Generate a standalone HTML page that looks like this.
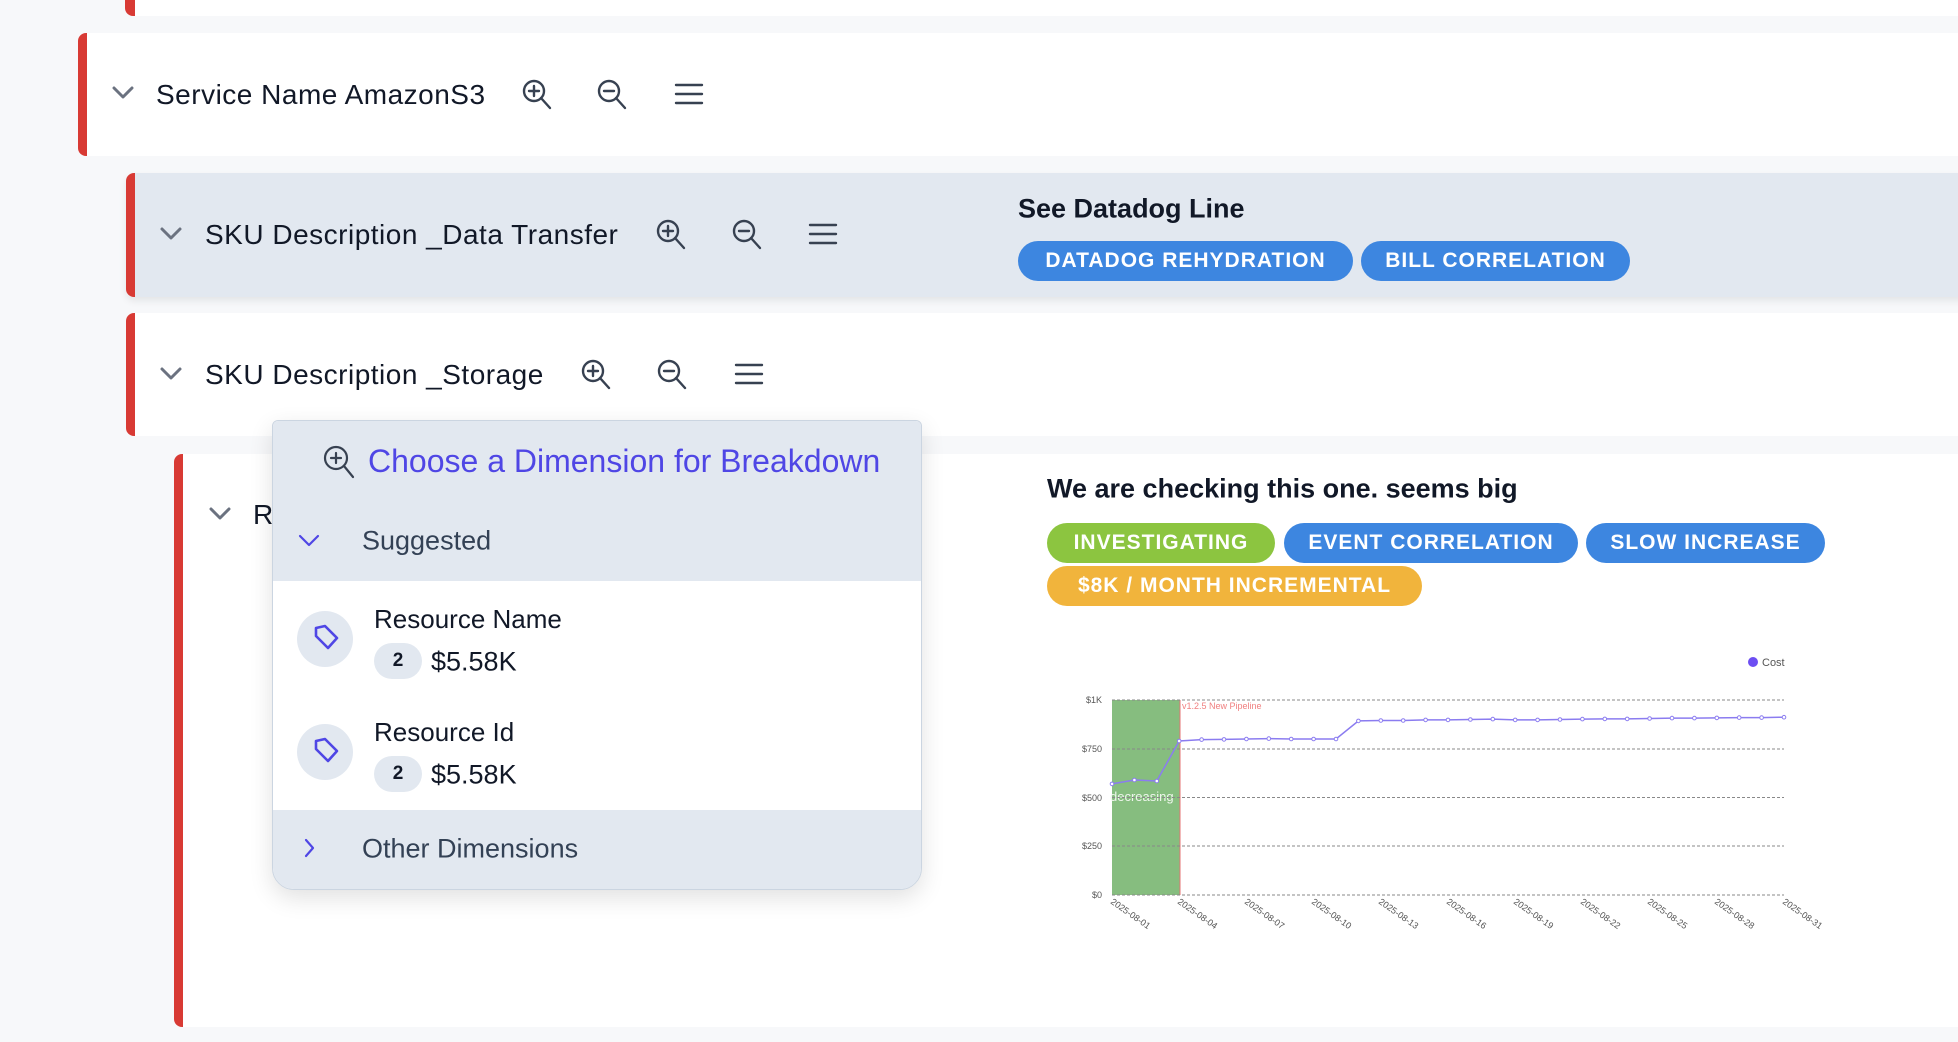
<!DOCTYPE html>
<html><head><meta charset="utf-8"><style>
*{margin:0;padding:0;box-sizing:border-box}
body{width:1958px;height:1042px;background:#f7f8fa;position:relative;overflow:hidden;font-family:"Liberation Sans",sans-serif;color:#111827}
.a{position:absolute}
.card{position:absolute;background:#fff;border-left:9px solid #d83a34;border-radius:8px 0 0 8px}
.t{position:absolute;font-size:28px;color:#111827;line-height:1;transform:translateY(-50%);white-space:nowrap}
.h{letter-spacing:0.5px}
.badge{position:absolute;height:40px;border-radius:20px;color:#fff;font-weight:bold;font-size:21px;letter-spacing:1px;display:flex;align-items:center;justify-content:center;white-space:nowrap}
.blue{background:#3d86e0}
svg.ic{position:absolute}
</style></head><body>
<div class="card" style="left:125px;top:-10px;width:1840px;height:26px;border-left-width:10px"></div>
<div class="card" style="left:78px;top:33px;width:1890px;height:123px"></div>
<div class="card" style="left:126px;top:173px;width:1840px;height:124px;background:#e2e8f0;box-shadow:0 4px 8px rgba(0,0,0,0.08)"></div>
<div class="card" style="left:126px;top:313px;width:1840px;height:123px"></div>
<div class="card" style="left:174px;top:454px;width:1790px;height:573px"></div>

<svg class="a" style="left:0;top:0" width="1958" height="1042" fill="none" stroke-linecap="round" stroke-linejoin="round">
<g stroke="#6b7280" stroke-width="3">
<path d="M114 88l9 9 9-9"/><path d="M162 229l9 9 9-9"/><path d="M162 369l9 9 9-9"/><path d="M211 509l9 9 9-9"/>
</g>
<g stroke="#374151" stroke-width="2.4">
<defs>
<g id="zp"><circle cx="-3" cy="-3" r="10"/><path d="M4 4l9 10M-3 -8v10M-8 -3h10"/></g>
<g id="zm"><circle cx="-3" cy="-3" r="10"/><path d="M4 4l9 10M-8 -3h10"/></g>
<g id="mn"><path d="M-13 -9h26M-13 0h26M-13 9h26"/></g>
</defs>
<use href="#zp" x="537" y="94"/><use href="#zm" x="612" y="94"/><use href="#mn" x="689" y="94"/>
<use href="#zp" x="671" y="234"/><use href="#zm" x="747" y="234"/><use href="#mn" x="823" y="234"/>
<use href="#zp" x="596" y="374"/><use href="#zm" x="672" y="374"/><use href="#mn" x="749" y="374"/>
</g>
</svg>

<div class="t h" style="left:156px;top:95px">Service Name AmazonS3</div>
<div class="t h" style="left:205px;top:235px">SKU Description _Data Transfer</div>
<div class="t h" style="left:205px;top:375px">SKU Description _Storage</div>
<div class="t h" style="left:253px;top:515px">R</div>

<div class="t" style="left:1018px;top:209px;font-size:27px;font-weight:600">See Datadog Line</div>
<div class="badge blue" style="left:1018px;top:241px;width:335px">DATADOG REHYDRATION</div>
<div class="badge blue" style="left:1361px;top:241px;width:269px">BILL CORRELATION</div>

<div class="t" style="left:1047px;top:489px;font-size:27px;font-weight:600">We are checking this one. seems big</div>
<div class="badge" style="left:1047px;top:523px;width:228px;background:#8cc540">INVESTIGATING</div>
<div class="badge blue" style="left:1284px;top:523px;width:294px">EVENT CORRELATION</div>
<div class="badge blue" style="left:1586px;top:523px;width:239px">SLOW INCREASE</div>
<div class="badge" style="left:1047px;top:566px;width:375px;background:#f1b43c">$8K / MONTH INCREMENTAL</div>

<svg class="a" style="left:0;top:0" width="1958" height="1042" font-family="Liberation Sans,sans-serif">
<circle cx="1753" cy="662" r="5" fill="#6c4ef2"/><text x="1762" y="666" font-size="11" fill="#555">Cost</text>
<rect x="1112" y="700" width="68" height="195" fill="#86bd7f"/>
<line x1="1180" y1="700" x2="1180" y2="895" stroke="#e57373" stroke-width="1"/>
<text x="1182" y="709" font-size="9" fill="#f08080">v1.2.5 New Pipeline</text>
<text x="1110" y="801" font-size="13" fill="#eef6ec">decreasing</text>
<g stroke="#888" stroke-dasharray="3 2" stroke-width="1">
<path d="M1112 700H1784M1112 749H1784M1112 797.5H1784M1112 846H1784M1112 895H1784"/></g>
<g font-size="9" fill="#555" text-anchor="end">
<text x="1102" y="703">$1K</text><text x="1102" y="752">$750</text><text x="1102" y="801">$500</text><text x="1102" y="849">$250</text><text x="1102" y="898">$0</text></g>
<polyline fill="none" stroke="#8b7cf0" stroke-width="1.5" points="1112,783.9 1134.4,780 1156.8,781 1179.2,741 1201.6,739.6 1224,739.4 1246.4,739 1268.8,738.6 1291.2,739 1313.6,739 1336,739 1358.4,720.9 1380.8,720.5 1403.2,720.5 1425.6,719.9 1448,719.9 1470.4,719.5 1492.8,719.1 1515.2,719.9 1537.6,719.9 1560,719.5 1582.4,719.1 1604.8,718.9 1627.2,718.9 1649.6,718.5 1672,718.1 1694.4,718.1 1716.8,717.9 1739.2,717.6 1761.6,717.6 1784,717.2"/>
<g fill="#fff" stroke="#8b7cf0" stroke-width="1">
<circle cx="1112" cy="783.9" r="1.8"/><circle cx="1134.4" cy="780" r="1.8"/><circle cx="1156.8" cy="781" r="1.8"/><circle cx="1179.2" cy="741" r="1.8"/><circle cx="1201.6" cy="739.6" r="1.8"/><circle cx="1224" cy="739.4" r="1.8"/><circle cx="1246.4" cy="739" r="1.8"/><circle cx="1268.8" cy="738.6" r="1.8"/><circle cx="1291.2" cy="739" r="1.8"/><circle cx="1313.6" cy="739" r="1.8"/><circle cx="1336" cy="739" r="1.8"/><circle cx="1358.4" cy="720.9" r="1.8"/><circle cx="1380.8" cy="720.5" r="1.8"/><circle cx="1403.2" cy="720.5" r="1.8"/><circle cx="1425.6" cy="719.9" r="1.8"/><circle cx="1448" cy="719.9" r="1.8"/><circle cx="1470.4" cy="719.5" r="1.8"/><circle cx="1492.8" cy="719.1" r="1.8"/><circle cx="1515.2" cy="719.9" r="1.8"/><circle cx="1537.6" cy="719.9" r="1.8"/><circle cx="1560" cy="719.5" r="1.8"/><circle cx="1582.4" cy="719.1" r="1.8"/><circle cx="1604.8" cy="718.9" r="1.8"/><circle cx="1627.2" cy="718.9" r="1.8"/><circle cx="1649.6" cy="718.5" r="1.8"/><circle cx="1672" cy="718.1" r="1.8"/><circle cx="1694.4" cy="718.1" r="1.8"/><circle cx="1716.8" cy="717.9" r="1.8"/><circle cx="1739.2" cy="717.6" r="1.8"/><circle cx="1761.6" cy="717.6" r="1.8"/><circle cx="1784" cy="717.2" r="1.8"/>
</g>
<g font-size="9" fill="#555">
<text transform="translate(1110,903) rotate(35)">2025-08-01</text>
<text transform="translate(1177,903) rotate(35)">2025-08-04</text>
<text transform="translate(1244,903) rotate(35)">2025-08-07</text>
<text transform="translate(1311,903) rotate(35)">2025-08-10</text>
<text transform="translate(1378,903) rotate(35)">2025-08-13</text>
<text transform="translate(1446,903) rotate(35)">2025-08-16</text>
<text transform="translate(1513,903) rotate(35)">2025-08-19</text>
<text transform="translate(1580,903) rotate(35)">2025-08-22</text>
<text transform="translate(1647,903) rotate(35)">2025-08-25</text>
<text transform="translate(1714,903) rotate(35)">2025-08-28</text>
<text transform="translate(1782,903) rotate(35)">2025-08-31</text>
</g>
</svg>

<!-- dropdown -->
<div class="a" style="left:272px;top:420px;width:650px;height:470px;background:#fff;border:1.5px solid #cbd5e1;border-radius:6px 6px 22px 22px;overflow:hidden;box-shadow:0 8px 24px rgba(0,0,0,0.12)">
 <div class="a" style="left:0;top:0;width:100%;height:160px;background:#e2e8f0"></div>
 <div class="a" style="left:0;top:389px;width:100%;height:81px;background:#e2e8f0"></div>
</div>
<svg class="a" style="left:0;top:0" width="1958" height="1042" fill="none" stroke-linecap="round" stroke-linejoin="round">
<g stroke="#374151" stroke-width="2.2"><circle cx="336" cy="458" r="11"/><path d="M344 466l9 11M336 453v10M331 458h10"/></g>
<path d="M300 536l9 9 9-9" stroke="#4f46e5" stroke-width="2.2"/>
<path d="M306 840l7 8-7 8" stroke="#4f46e5" stroke-width="2.2"/>
<circle cx="325" cy="639" r="28" fill="#e2e8f0"/><circle cx="325" cy="752" r="28" fill="#e2e8f0"/>
<g stroke="#4f46e5" stroke-width="2.6">
<path d="M316 628l9-2 12 12-9 10-12-12z"/>
<path d="M316 741l9-2 12 12-9 10-12-12z"/>
</g>
</svg>
<div class="t" style="left:368px;top:461px;font-size:32px;color:#4f46e5">Choose a Dimension for Breakdown</div>
<div class="t" style="left:362px;top:541px;font-size:27px;color:#334155">Suggested</div>
<div class="t" style="left:374px;top:619px;font-size:26px">Resource Name</div>
<div class="a" style="left:374px;top:643px;width:48px;height:36px;border-radius:18px;background:#e2e8f0;font-weight:bold;font-size:19px;display:flex;align-items:center;justify-content:center">2</div>
<div class="t" style="left:431px;top:662px;font-size:27px">$5.58K</div>
<div class="t" style="left:374px;top:732px;font-size:26px">Resource Id</div>
<div class="a" style="left:374px;top:756px;width:48px;height:36px;border-radius:18px;background:#e2e8f0;font-weight:bold;font-size:19px;display:flex;align-items:center;justify-content:center">2</div>
<div class="t" style="left:431px;top:775px;font-size:27px">$5.58K</div>
<div class="t" style="left:362px;top:849px;font-size:27px;color:#334155">Other Dimensions</div>
</body></html>
